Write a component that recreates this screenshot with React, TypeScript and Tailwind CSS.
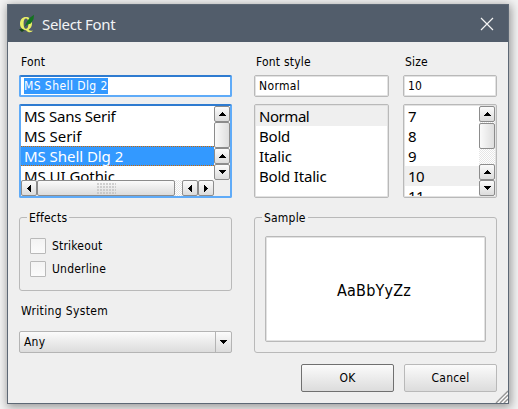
import type { ReactNode } from "react";

const ui = "font-['DejaVu_Sans_Condensed','DejaVu_Sans',sans-serif] text-[12px] font-stretch-condensed tracking-[0.2px]";
const face = "bg-linear-to-b from-[#fbfbfb] to-[#dcdcdc]";

function Label({ children, className = "" }: { children: ReactNode; className?: string }) {
  return <div className={`whitespace-nowrap leading-4 ${className}`}>{children}</div>;
}

function Arrow({ dir }: { dir: "up" | "down" | "left" | "right" }) {
  const d = {
    up: "M4 0h1v1h1v1h1v1h1v1H1V3h1V2h1V1h1z",
    down: "M1 0h7v1H7v1H6v1H5v1H4V3H3V2H2V1H1z",
    left: "M0 4h1V3h1V2h1V1h1v7H3V7H2V6H1V5H0z",
    right: "M0 1h1v1h1v1h1v1h1v1H3v1H2v1H1v1H0z",
  }[dir];
  const wide = dir === "up" || dir === "down";
  return (
    <svg width={wide ? 9 : 4} height={wide ? 4 : 9} shapeRendering="crispEdges">
      <path d={d} />
    </svg>
  );
}

function ArrowButton({ dir }: { dir: "up" | "down" | "left" | "right" }) {
  return (
    <div className={`flex size-4 shrink-0 items-center justify-center rounded-[2px] border border-[#8c8c8c] ${face}`}>
      <Arrow dir={dir} />
    </div>
  );
}

function Row({ children, className = "" }: { children: ReactNode; className?: string }) {
  return <div className={`h-5 shrink-0 whitespace-nowrap pl-[3px] leading-[21px] ${className}`}>{children}</div>;
}

const grayBox = "rounded-[2px] border border-[#b9b9b9] bg-white p-px shadow-[inset_0_0_0_1px_#e2e2e2]";
const blueBox = "rounded-[2px] border-2 border-[#5fabf8] border-t-[#2e7bd0] bg-white";
const list = "h-[94px] font-['Noto_Sans',sans-serif] text-[15px]";
const track = "bg-[repeating-conic-gradient(#e6e6e6_0_25%,#ffffff_0_50%)] bg-size-[2px_2px]";

function Check({ label }: { label: string }) {
  return (
    <div className="flex h-4 items-center">
      <span className="size-4 rounded-[1px] border border-[#b9b9b9] bg-linear-to-b from-[#f3f3f3] to-[#fbfbfb]" />
      <span className="pl-1.5">{label}</span>
    </div>
  );
}

export default function App() {
  return (
    <div className={`h-[409px] w-[518px] overflow-hidden bg-[#f3f3f3] pl-[7px] pt-1 text-black ${ui}`}>
      <div className="relative flex h-[400px] w-[502px] flex-col border border-[#5d6875] bg-[#efefef] shadow-[1px_2px_9px_1px_rgba(0,0,0,0.38)]">
        <header className="flex h-[37px] shrink-0 items-center bg-[#525d6b] pl-[11px] text-[#f2f4f6]">
          <svg width="17" height="20" viewBox="0 0 17 20">
            <path d="M0 15.5l4-1.5 3 1-4 3z" fill="#17451b" />
            <path
              d="M7 3c3.6 0 6 2.7 6 6.6 0 3-1.3 5-3.4 6 .8 1.2 2.2 1.5 4.2.9-.8 2-4.600 2.600-6.700-.3C3.400 16.200 1 13.500 1 9.600 1 5.700 3.400 3 7 3zM7 4.400C5.500 4.400 4.600 6 4.600 9.600s.9 5.200 2.400 5.200 2.400-1.600 2.400-5.200S8.500 4.400 7 4.400z"
              fill="#e9ee66"
              fillRule="evenodd"
            />
            <path d="M5.500 12.500L8 7.500 10.500 4 15 .8l-.5 4.400-2.700 4.300-3 1z" fill="#147320" />
          </svg>
          <span className="pl-1.5 font-['Noto_Sans',sans-serif] text-[15px] leading-5 tracking-[-0.35px]">Select Font</span>
          <svg className="ml-auto mr-[14px]" width="14" height="14">
            <path d="M1 1l12 12M13 1L1 13" stroke="#f4f4f4" strokeWidth="1.2" />
          </svg>
        </header>

        <main className="flex flex-col pl-[11px] pr-[11px] pt-3">
          <div className="flex h-[144px]">
            <section className="w-[213px]">
              <Label className="pl-0.5">Font</Label>
              <div className={`mt-[5px] flex h-[22px] items-center pl-[3px] tracking-[0.42px] ${blueBox}`}>
                <span className="h-4 bg-[#3399ff] leading-4 text-white">MS Shell Dlg 2</span>
              </div>
              <div className={`mt-[7px] flex flex-col ${blueBox} ${list}`}>
                <div className="flex h-[74px]">
                  <div className="w-[193px] overflow-hidden tracking-[-0.05px]">
                    <Row className="tracking-[-0.25px]">MS Sans Serif</Row>
                    <Row>MS Serif</Row>
                    <Row className="border-y border-dotted border-[#cc6600] bg-[#3399ff] leading-[19px]! text-white">MS Shell Dlg 2</Row>
                    <Row>MS UI Gothic</Row>
                  </div>
                  <div className="flex w-4 flex-col">
                    <ArrowButton dir="up" />
                    <div className="h-[26px] rounded-[2px] border border-[#8c8c8c] bg-linear-to-r from-[#fafafa] to-[#dedede]" />
                    <ArrowButton dir="up" />
                    <ArrowButton dir="down" />
                  </div>
                </div>
                <div className="flex h-4 bg-[#efefef]">
                  <ArrowButton dir="left" />
                  <div className={`flex w-[138px] items-center justify-center rounded-[2px] border border-[#8c8c8c] ${face}`}>
                    <span className="h-[11px] w-[19px] bg-[radial-gradient(circle_at_1px_1px,#c2c2c2_0.6px,transparent_1px)] bg-size-[3px_3px]" />
                  </div>
                  <div className={`w-[7px] ${track}`} />
                  <ArrowButton dir="left" />
                  <ArrowButton dir="right" />
                </div>
              </div>
            </section>

            <section className="ml-[22px] w-[135px]">
              <Label className="pl-0.5">Font style</Label>
              <div className={`mt-[5px] flex h-[22px] items-center pl-1 tracking-[0.35px] ${grayBox}`}>Normal</div>
              <div className={`mt-[7px] overflow-hidden tracking-[-0.2px] ${grayBox} ${list}`}>
                <Row className="bg-[#efefef] tracking-[-0.45px]">Normal</Row>
                <Row>Bold</Row>
                <Row>Italic</Row>
                <Row>Bold Italic</Row>
              </div>
            </section>

            <section className="ml-[14px] w-[94px]">
              <Label className="pl-0.5">Size</Label>
              <div className={`mt-[5px] flex h-[22px] items-center pl-1 ${grayBox}`}>10</div>
              <div className={`mt-[7px] flex tracking-[-0.6px] ${grayBox} ${list}`}>
                <div className="w-[74px] overflow-hidden">
                  <Row>7</Row>
                  <Row>8</Row>
                  <Row>9</Row>
                  <Row className="bg-[#efefef]">10</Row>
                  <Row>11</Row>
                </div>
                <div className={`flex w-4 flex-col ${track}`}>
                  <ArrowButton dir="up" />
                  <div className="mt-px h-[26px] rounded-[2px] border border-[#8c8c8c] bg-linear-to-r from-[#fafafa] to-[#dedede]" />
                  <div className="grow" />
                  <ArrowButton dir="up" />
                  <ArrowButton dir="down" />
                </div>
              </div>
            </section>
          </div>

          <div className="mt-[19px] flex">
            <section className="w-[213px]">
              <div className="relative h-[74px] rounded-[3px] border border-[#b9b9b9] pl-2.5 pt-5">
                <span className="absolute -top-2 left-[7px] bg-[#efefef] px-0.5 leading-4">Effects</span>
                <Check label="Strikeout" />
                <div className="h-[7px]" />
                <Check label="Underline" />
              </div>
              <Label className="mt-3 pl-0.5 tracking-[0.35px]">Writing System</Label>
              <div className={`mt-3 flex h-[22px] items-center rounded-[2px] border border-[#b4b4b4] pl-1 ${face}`}>
                <span className="grow">Any</span>
                <span className="flex h-full w-4 items-center justify-center border-l border-[#b4b4b4]">
                  <Arrow dir="down" />
                </span>
              </div>
            </section>
            <section className="relative ml-[22px] h-[136px] w-[243px] rounded-[3px] border border-[#b9b9b9] px-2.5 pt-[18px]">
              <span className="absolute -top-2 left-[7px] bg-[#efefef] px-0.5 leading-4">Sample</span>
              <div className={`flex h-[106px] items-center justify-center pt-1! pr-1! text-[16px] ${grayBox}`}>AaBbYyZz</div>
            </section>
          </div>

          <footer className="mt-[11px] flex justify-end gap-2.5">
            <button className={`h-7 w-[93px] rounded-[2px] border border-[#707070] ${face}`}>OK</button>
            <button className={`h-7 w-[93px] rounded-[2px] border border-[#b9b9b9] ${face}`}>Cancel</button>
          </footer>
        </main>
        <svg className="absolute bottom-0 right-0" width="13" height="13">
          <path d="M1 13L13 1M5 13L13 5M9 13L13 9" stroke="#949494" strokeWidth="1.3" />
          <path d="M3 13L13 3M7 13L13 7M11 13L13 11" stroke="#ffffff" strokeWidth="1" />
        </svg>
      </div>
    </div>
  );
}
